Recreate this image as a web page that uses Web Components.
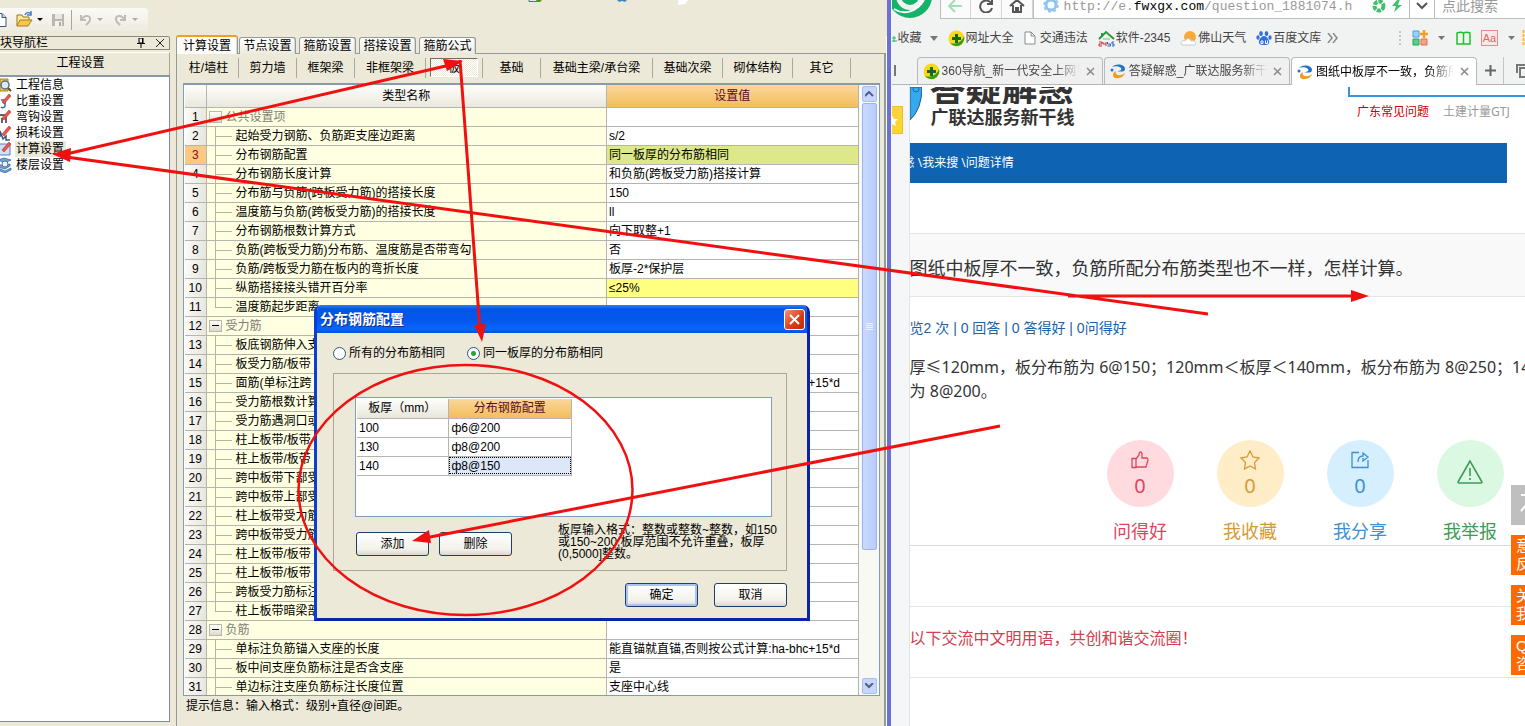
<!DOCTYPE html>
<html lang="zh-CN">
<head>
<meta charset="utf-8">
<title>工程设置</title>
<style>
html,body{margin:0;height:100%;overflow:hidden;background:#ece9d8}
body{font:12px/16px "Liberation Sans","Noto Sans CJK SC",sans-serif;color:#000}
</style>
</head>
<body>
<desk-top></desk-top>
<script>
const BASE = `*{box-sizing:border-box}button,input{font:inherit;color:inherit}a{color:inherit;text-decoration:none}svg{display:block;flex:none}`;
function define(name, css, html, setup) {
  customElements.define(name, class extends HTMLElement {
    constructor() {
      super();
      this.attachShadow({ mode: 'open' });
    }
    connectedCallback() {
      const markup = typeof html === 'function' ? html(this) : html;
      this.shadowRoot.innerHTML = `<style>${BASE}${css}</style>${markup}`;
      if (setup) setup(this);
    }
  });
}

/* ---------- Left application ---------- */

define('tool-bar', `
:host{display:block;height:36px;padding-top:8px}
.strip{width:148px;height:23px;display:flex;align-items:center;background:linear-gradient(#fbfaf6,#eeebdf);border-radius:0 4px 4px 0;padding-bottom:0}
button{border:0;background:none;padding:0;margin:0;height:20px;display:flex;align-items:center}
.new{width:16px}.open{width:22px}.drop{width:9px;margin-right:5px}.save{width:20px}
.sep{width:1px;height:20px;background:#a9a698;margin-right:6px}
.hist{width:18px;margin-left:0}.d2{width:9px;margin:0 7px 0 2px}`, `
<div class="strip">
<button class="new" aria-label="新建"><svg width="16" height="16"><path d="M-4 1.500h6l4 4v9h-10z" fill="#fff" stroke="#3b5578"/><path d="M2 1.500v4h4" fill="#b9d0ee" stroke="#3b5578"/></svg></button>
<button class="open" aria-label="打开"><svg width="18" height="17"><path d="M1 15V4h5l1 2h6v3" fill="#ffe9a0" stroke="#9a7418"/><path d="M1 15l3-6h12l-4 6z" fill="#f5c84c" stroke="#a87f1c"/><path d="M9 4c1-3 4-3 6-1M15 0v4h-4" fill="none" stroke="#4a7ec2" stroke-width="1.500"/></svg></button>
<button class="drop" aria-label="打开菜单"><svg width="7" height="4"><path d="M0 0h6L3 3z"/></svg></button>
<button class="save" aria-label="保存"><svg width="14" height="14"><path d="M1 1h12v12H1z" fill="#b8b7b0"/><path d="M4 1h7v5H4z" fill="#e8e7e1"/><path d="M4 8h7v5H4z" fill="#f4f3ee"/><path d="M8 9h2v4H8z" fill="#aaa"/></svg></button>
<span class="sep"></span>
<button class="hist" aria-label="撤销"><svg width="16" height="16"><path d="M3 3v5h5M3 8c3-5 8-5 9-2s-2 5-4 7" fill="none" stroke="#bdbcb5" stroke-width="2"/></svg></button>
<button class="d2" aria-label="撤销菜单"><svg width="7" height="4"><path d="M0 0h6L3 3z" fill="#aaa"/></svg></button>
<button class="hist" aria-label="重做"><svg width="16" height="16"><path d="M12 3v5H7M12 8C9 3 4 3 3 6s2 5 4 7" fill="none" stroke="#bdbcb5" stroke-width="2"/></svg></button>
<button class="d2" aria-label="重做菜单"><svg width="7" height="4"><path d="M0 0h6L3 3z" fill="#aaa"/></svg></button>
</div>`);

const tool = (x) => `<svg width="12" height="16">${x}</svg>`;
const pen = '<path d="M2 9L9 1l2 2-7 8z" fill="#e8574a" stroke="#b23428" stroke-width=".6"/>';
const NAV = [
  ['工程信息', tool('<path d="M0 2h8v12H0z" fill="#f2c44c" stroke="#a87f1c"/><circle cx="5" cy="8" r="4" fill="#d9ecfb" stroke="#5c7186" stroke-width="1.500"/><path d="M8 11l3 3" stroke="#6b4b2a" stroke-width="2"/>')],
  ['比重设置', tool('<path d="M1 7h4v6c0 2-3 2-4 1M5 9v4" fill="none" stroke="#3a6a9a" stroke-width="1.500"/>' + pen)],
  ['弯钩设置', tool('<path d="M0 6h6v8M2 9v5" fill="none" stroke="#333" stroke-width="1.500"/>' + pen)],
  ['损耗设置', tool('<path d="M0 12V6l3 8 3-3v4h4" fill="none" stroke="#3a5578" stroke-width="1.500"/>' + pen)],
  ['计算设置', tool('<path d="M-2 3h12v11H-2z" fill="#cfe0f8" stroke="#5a7db8"/>' + pen)],
  ['楼层设置', tool('<path d="M-2 3l6-2 7 2-6 3zM-2 7l6 2 6-2v2l-5 3-7-2zM-2 11l7 3 6-3v2l-6 3-7-3z" fill="#6aa4e0" stroke="#2d5f9e" stroke-width=".7"/><circle cx="5" cy="7" r="3" fill="#e5f2fd" stroke="#5c7186"/>')]
];
define('nav-panel', `
:host{display:flex;flex-direction:column;min-height:0}
header{height:14px;display:flex;align-items:center;border:1px solid #8c897c;border-left:0;border-radius:0 2px 0 0;padding-right:5px}
header b{font-weight:400;flex:1}
header button{border:0;background:none;padding:0;display:flex;margin-left:11px}
h2{margin:2px 0 0;height:23px;border:1px solid #a7a597;border-left:0;border-top-color:#fff;font:inherit;line-height:20px;text-align:center;padding-right:8px;border-bottom:0}
nav{flex:1;background:#fff;border:1px solid #7f8ea0;border-left:0;border-top:2px solid #8a98a8;margin-bottom:4px}
a{display:flex;align-items:center;height:16px}
a span{padding:0 2px 0 1px;margin-left:3px}
a.on span{background:#ece9d8}`, `
<header><b>块导航栏</b><button aria-label="固定"><svg width="8" height="10"><path d="M2 0h4v5H2zM0 5.500h8M4 6v4M5.500 0v5" fill="none" stroke="#000"/></svg></button><button aria-label="关闭"><svg width="8" height="8"><path d="M0 0l8 8M8 0L0 8" stroke="#222"/></svg></button></header>
<h2>工程设置</h2>
<nav>${NAV.map(([t, i]) => `<a href="#"${t === '计算设置' ? ' class="on"' : ''}>${i}<span>${t}</span></a>`).join('')}</nav>`);

define('tab-strip', `
:host{display:flex;gap:3px;align-items:flex-end;height:18px;padding:0}
button{height:17px;width:57px;padding:0;border:1px solid #919b9c;border-bottom:0;border-radius:3px 3px 0 0;background:linear-gradient(#fff,#eceadf);line-height:14px;box-shadow:inset -1px 0 #dcdacd}
button.on{height:19px;width:62px;margin-right:-2px;border-top:2px solid #f0a020;background:#fcfcfa}`, `
<button class="on">计算设置</button><button>节点设置</button><button>箍筋设置</button><button>搭接设置</button><button>箍筋公式</button>`);

const CATS = [['柱/墙柱', 60], ['剪力墙', 58], ['框架梁', 58], ['非框架梁', 71], ['板', 57], ['基础', 58], ['基础主梁/承台梁', 112], ['基础次梁', 70], ['砌体结构', 70], ['其它', 58]];
define('category-bar', `
:host{display:flex;height:20px;margin:2px 0 5px 0;overflow:hidden}
.c{flex:none;border-right:1px solid #aca899;display:flex;justify-content:center}
button{border:0;background:none;padding:0;height:19px;line-height:18px;white-space:nowrap}
button.on{width:48px;border:1px solid #716f64;border-right-color:#fff;border-bottom-color:#fff;background:repeating-conic-gradient(#fff 0 25%,#ece9d8 0 50%) 0 0/2px 2px}`,
CATS.map(([t, w]) => `<span class="c" style="width:${w}px"><button${t === '板' ? ' class="on"' : ''}>${t}</button></span>`).join(''));

const ROWS = [
  ['g', '公共设置项', ''], ['', '起始受力钢筋、负筋距支座边距离', 's/2'], ['', '分布钢筋配置', '同一板厚的分布筋相同'],
  ['', '分布钢筋长度计算', '和负筋(跨板受力筋)搭接计算'], ['', '分布筋与负筋(跨板受力筋)的搭接长度', '150'],
  ['', '温度筋与负筋(跨板受力筋)的搭接长度', 'll'], ['', '分布钢筋根数计算方式', '向下取整+1'],
  ['', '负筋(跨板受力筋)分布筋、温度筋是否带弯勾', '否'], ['', '负筋/跨板受力筋在板内的弯折长度', '板厚-2*保护层'],
  ['', '纵筋搭接接头错开百分率', '≤25%'], ['e', '温度筋起步距离', ''],
  ['g', '受力筋', ''], ['', '板底钢筋伸入支', ''], ['', '板受力筋/板带', ''], ['', '面筋(单标注跨', '能直锚就直锚,否则按公式计算:ha-bhc+15*d'],
  ['', '受力筋根数计算', ''], ['', '受力筋遇洞口或', ''], ['', '柱上板带/板带', ''], ['', '柱上板带/板带', ''],
  ['', '跨中板带下部受', ''], ['', '跨中板带上部受', ''], ['', '柱上板带受力筋', ''], ['', '跨中板带受力筋', ''],
  ['', '柱上板带/板带', ''], ['', '柱上板带/板带', ''], ['', '跨板受力筋标注', ''], ['e', '柱上板带暗梁部', ''],
  ['g', '负筋', ''], ['', '单标注负筋锚入支座的长度', '能直锚就直锚,否则按公式计算:ha-bhc+15*d'],
  ['', '板中间支座负筋标注是否含支座', '是'], ['', '单边标注支座负筋标注长度位置', '支座中心线']
];
define('settings-grid', `
:host{display:flex;border:1px solid #7f9db9;border-top:2px solid #8a9aa8;background:#fff;overflow:hidden;min-height:0}
.wrap{flex:1;overflow:hidden;padding-left:1px}
table{border-collapse:collapse;table-layout:fixed;width:100%}
th,td{padding:0;height:19px;font-weight:400;border:solid #b5b5b0;border-width:0 1px 1px 0;white-space:nowrap;overflow:hidden;line-height:18px}
thead th{height:22px;background:linear-gradient(#fdfdfb,#eae8dd)}
thead th.val{background:linear-gradient(#fbd79a,#f2bd5c);color:#5c0a28}
tbody th{background:linear-gradient(100deg,#fcfcfa,#e6e4da);text-align:center}
tbody th.cur{background:#fdc880;color:#8a1010}
.name{background:#ffffe1}
.in{display:flex;height:18px;align-items:center}
.branch{width:17px;height:18px;margin:0 4px 0 8px;background:linear-gradient(#b5b5a4,#b5b5a4) 0 0/1px 100% no-repeat,linear-gradient(#b5b5a4,#b5b5a4) 0 9px/17px 1px no-repeat}
.branch.end{background-size:1px 9px,17px 1px}
.box{width:13px;height:12px;border:1px solid #b9b8ac;background:linear-gradient(#fff,#dcdacb);margin:0 4px 0 2px;display:flex;align-items:center;justify-content:center;padding:0}
.box i{width:7px;height:1px;background:#000}
.grp{color:#808078}
.v{padding-left:2px}
.v.hot{background:#dde889}.v.warn{background:#ffff80}
.bar{width:20px;padding:1px 2px 1px 3px;display:flex;flex-direction:column;background:#f8f8f5}
.bar button{height:16px;border:1px solid #a9bdf0;border-radius:2px;background:#c8d6fb;padding:0;display:flex;align-items:center;justify-content:center}
.thumb{flex:447;border:1px solid #9cb3ee;border-radius:2px;background:linear-gradient(90deg,#cbd9fd,#b9cbfa);display:flex;align-items:center;justify-content:center;margin-top:1px}
.rest{flex:128}`, `
<div class="wrap"><table><colgroup><col style="width:21px"><col style="width:59.500%"><col></colgroup>
<thead><tr><th></th><th>类型名称</th><th class="val">设置值</th></tr></thead><tbody>
${ROWS.map(([k, n, v], i) => `<tr><th${i === 2 ? ' class="cur"' : ''}>${i + 1}</th><td class="name"><div class="in">${k === 'g' ? `<button class="box" aria-label="折叠">${i ? '<i></i>' : ''}</button><span class="grp">${n}</span>` : `<span class="branch${k === 'e' ? ' end' : ''}"></span>${n}`}</div></td><td class="v${i === 2 ? ' hot' : i === 9 ? ' warn' : ''}">${v}</td></tr>`).join('')}
</tbody></table></div>
<div class="bar"><button aria-label="向上滚动"><svg width="9" height="6"><path d="M0 5l4-4 4 4" fill="none" stroke="#4d6185" stroke-width="2"/></svg></button>
<div class="thumb"><svg width="7" height="8"><path d="M0 .5h7M0 2.500h7M0 4.500h7M0 6.500h7" stroke="#eef4fe"/></svg></div><div class="rest"></div>
<button aria-label="向下滚动"><svg width="9" height="6"><path d="M0 0l4 4 4-4" fill="none" stroke="#4d6185" stroke-width="2"/></svg></button></div>`);

define('settings-app', `
:host{display:flex;flex-direction:column;background:#ece9d8;border-right:4px solid #6a70d4;overflow:hidden}
.main{flex:1;min-height:0;display:flex;gap:6px;border-right:1px solid #fff}
nav-panel{width:170px;flex:none}
.right{flex:1;min-width:0;display:flex;flex-direction:column}
.panel{flex:1;min-height:0;display:flex;flex-direction:column;border:1px solid #919b9c;border-width:1px 2px 0 1px;padding:2px 4px 0 2px;margin-top:-1px}
tab-strip{z-index:1}
settings-grid{flex:1;margin:0 0 0 4px}
p{margin:0;padding:2px 0 0 7px;height:30px;line-height:16px}`, `
<tool-bar></tool-bar>
<div class="main"><nav-panel></nav-panel>
<div class="right"><tab-strip></tab-strip><div class="panel"><category-bar></category-bar><settings-grid></settings-grid><p>提示信息：输入格式：级别+直径@间距。</p></div></div></div>`);

/* ---------- Dialog ---------- */

define('xp-button', `
:host{display:block;width:73px;height:24px}
button{width:100%;height:100%;border:1px solid #1f3f6b;border-radius:3px;background:linear-gradient(#fff,#f2f1ea 75%,#dcd8ca);padding:0;line-height:20px}
:host([primary]) button{box-shadow:inset 0 0 0 2px #a9c4f0}`, `<button><slot></slot></button>`);

define('rebar-dialog', `
:host{display:flex;flex-direction:column;background:#ece9d8;border:solid #0a3fd0;border-width:0 3px 3px;border-radius:7px 7px 0 0;border-right-color:#0a24a8;border-bottom-color:#0a24a8;overflow:hidden}
header{height:28px;flex:none;background:linear-gradient(#2d80f4,#0554e6 15%,#0458ee 60%,#0866fc 85%,#0650d8);display:flex;align-items:center;justify-content:space-between;padding:0 2px 0 3px;color:#fff;font-size:14px;font-weight:700;text-shadow:1px 1px #0a2f8a}
header button{width:21px;height:21px;border:1px solid #fff;border-radius:3px;background:linear-gradient(135deg,#f0937a,#d83c14 60%,#b82d08);padding:0;display:flex;align-items:center;justify-content:center}
.radios{display:flex;gap:22px;padding:12px 0 0 16px}
label{display:flex;align-items:center;gap:3px}
input{appearance:none;width:13px;height:13px;margin:0;border:1px solid #2a5580;border-radius:50%;background:#fff}
input:checked{background:radial-gradient(circle,#2aa52a 0 2px,#fff 3px)}
fieldset{margin:12px 20px 0 16px;height:198px;padding:23px 14px 0 21px;border:1px solid #aca899;min-width:0}
.list{height:120px;background:#fff;border:1px solid #7f9db9;padding:1px 0 0 1px}
table{border-collapse:collapse;table-layout:fixed;width:215px}
th,td{height:19px;padding:0;font-weight:400;border:solid #b5b5b0;border-width:0 1px 1px 0;line-height:18px}
th{background:linear-gradient(#fdfdfb,#e8e6da)}th+th{background:linear-gradient(#fbd79a,#f2bd5c);color:#5c0a28}
td{padding-left:2px}td+td{padding-left:3px}
td.sel{background:#dde7f7;outline:1px dotted #000;outline-offset:-2px}
.row{display:flex;margin:15px 0 0 1px}
.row xp-button+xp-button{margin-left:10px}
.row p{margin:-8px -8px 0 46px;line-height:12px;flex:1;white-space:nowrap}
footer{display:flex;justify-content:flex-end;gap:16px;padding:12px 20px 0 0}`, `
<header><span>分布钢筋配置</span><button aria-label="关闭"><svg width="11" height="11"><path d="M1 1l9 9M10 1l-9 9" stroke="#fff" stroke-width="2"/></svg></button></header>
<div class="radios"><label><input type="radio" name="m">所有的分布筋相同</label><label><input type="radio" name="m" checked>同一板厚的分布筋相同</label></div>
<fieldset><div class="list"><table><colgroup><col style="width:91px"><col></colgroup><thead><tr><th>板厚（mm）</th><th>分布钢筋配置</th></tr></thead>
<tbody><tr><td>100</td><td>ф6@200</td></tr><tr><td>130</td><td>ф8@200</td></tr><tr><td>140</td><td class="sel">ф8@150</td></tr></tbody></table></div>
<div class="row"><xp-button>添加</xp-button><xp-button>删除</xp-button><p>板厚输入格式：整数或整数~整数，如150<br>或150~200,板厚范围不允许重叠，板厚<br>(0,5000]整数。</p></div></fieldset>
<footer><xp-button primary>确定</xp-button><xp-button>取消</xp-button></footer>`);

/* ---------- Browser ---------- */

const ICON = {
  plus: '<svg width="17" height="17"><circle cx="8.500" cy="8.500" r="8" fill="#fbd81a"/><path d="M2 13A8 8 0 0 0 16 6C14 12 8 15 2 13z" fill="#2e9b2e"/><path d="M8.500 4v9M4 8.500h9" stroke="#116b1c" stroke-width="3"/></svg>',
  doc: '<svg width="12" height="14" style="margin:0 3px 0 0"><path d="M1 1h6l4 4v8H1zM7 1v4h4" fill="#fff" stroke="#8a8a8a"/></svg>',
  house: '<svg width="17" height="17"><path d="M1 9l7-7 8 7M4 7V3" fill="none" stroke="#2a9a3a" stroke-width="2"/><path d="M5 9h7" stroke="#7ac27a"/><path d="M1 12h3v2H1v2h3M5 12v2h3M8 12v4" fill="none" stroke="#d2302a"/><path d="M9.500 12v2h3v2h-3M16 12h-2v2h2v2h-2" fill="none" stroke="#2a62c8"/></svg>',
  sun: '<svg width="17" height="17"><circle cx="10" cy="7" r="6" fill="#f8a83a"/><path d="M1 14c0-4 3-4 4-3 2-4 6-2 6 0 4-1 5 2 4 4H2z" fill="#fff" stroke="#c9c9c9"/></svg>',
  paw: '<svg width="16" height="16" fill="#2f6fe0"><ellipse cx="5" cy="3.500" rx="1.800" ry="2.500"/><ellipse cx="10.500" cy="3.500" rx="1.800" ry="2.500"/><ellipse cx="2" cy="7.500" rx="1.600" ry="2.200"/><ellipse cx="14" cy="7.500" rx="1.600" ry="2.200"/><path d="M8 6c3 0 6 5 5 7s-3 2-5 2-4 0-5-2 2-7 5-7z"/><path d="M5 11h2v2.500H5zM9.500 10.500v3h2v-3" fill="none" stroke="#fff"/></svg>',
  e: '<svg width="17" height="16"><path d="M2 4C6 0 15 1 15 6c0 3-4 3-8 2 4 0 5-1 4-3-2-2-6-2-9-1z" fill="#1f74c8"/><circle cx="2" cy="7" r="1.500" fill="#1f74c8"/><path d="M6 8c-2 4 4 6 9 2-2 6-12 7-12 2 0-2 1-3 3-4z" fill="#f19a1c"/></svg>'
};
define('fav-link', `:host{display:block;flex:none}a{display:flex;align-items:center;gap:1px;white-space:nowrap}`,
  el => `<a href="#">${ICON[el.getAttribute('icon')]}<span><slot></slot></span></a>`);

define('page-tab', `
:host{display:flex;align-items:center;flex:0 1 187px;min-width:0;height:27px;border:1px solid #b9b9b9;border-bottom:0;border-radius:4px 4px 0 0;padding:0 7px 0 5px;background:#f0f0f0;color:#444}
:host([active]){background:#fff;color:#000}
span{flex:1;overflow:hidden;white-space:nowrap;margin:0 6px 0 2px;-webkit-mask:linear-gradient(90deg,#000 82%,transparent)}
button{border:0;background:none;padding:0}`,
  el => `${ICON[el.getAttribute('icon')]}<span><slot></slot></span><button aria-label="关闭标签"><svg width="9" height="9"><path d="M1 1l7 7M8 1L1 8" stroke="#8a8a8a" stroke-width="1.500"/></svg></button>`);

define('browser-chrome', `
:host{display:block;background:#f1f2f2;color:#444}
.addr{height:19px;display:flex;overflow:hidden}
.addr>*{flex:none}
.nav{display:flex;margin-left:2px;border:1px solid #bdbdbd;border-top:0;background:#fff;width:94px}
.nav button{flex:1;border:0;border-right:1px solid #d5d5d5;background:#fbfbfb;padding:0 0 6px;display:flex;justify-content:center;align-items:center}
.url{flex:1;min-width:0;display:flex;background:#fff;border-bottom:1px solid #bdbdbd;padding:0 6px 6px 9px;align-items:center;gap:5px}
.url div{flex:1;font:13px/13px "Liberation Mono","Noto Sans CJK SC",monospace;color:#999;white-space:nowrap;overflow:hidden}
.url b{font-weight:400;color:#000}
.more{width:26px;border:solid #bdbdbd;border-width:0 1px 1px;background:#fff;display:flex;align-items:center;justify-content:center;padding:0 0 6px}
.addr input{width:90px;border:0;border-bottom:1px solid #bdbdbd;background:#fff;padding:0 0 6px 7px;font-size:14px;outline:0;border-radius:0}
.addr input::placeholder{color:#999}
.fav{height:38px;display:flex;align-items:center;gap:10px;overflow:hidden}
.fav>*{flex:none}
.first{display:flex;align-items:center;gap:1px}
.first .caret{margin-left:7px}
.tools{margin-left:auto;display:flex;align-items:center;gap:10px}
.tools button{border:0;background:none;padding:0}
.tools .aa{width:17px;height:16px;border:1px solid #e98a8a;background:#fde8e8;color:#e06666;font-size:11px;line-height:14px}
.tabs{height:28px;display:flex;gap:1px;border-bottom:1px solid #b5b5b5;align-items:flex-end;padding-left:1px}
.menu{width:23px;height:27px;display:flex;align-items:center;flex:none}
.tabs>button{border:0;background:none;flex:none;width:24px;height:27px;display:flex;align-items:center;justify-content:center;padding:0}
.tabs .last{border-left:1px solid #c5c5c5;width:22px;justify-content:flex-end}
page-tab[active]{margin-bottom:-1px;height:28px}`, `
<div class="addr"><svg width="46" height="19"><circle cx="18" cy="-4" r="18" fill="none" stroke="#15b36a" stroke-width="8"/><circle cx="18" cy="-4" r="9" fill="#15b36a"/><path d="M2 9c9 6 22 4 30-9" fill="none" stroke="#fff" stroke-width="2"/></svg>
<div class="nav"><button aria-label="后退"><svg width="15" height="13"><path d="M14 6H2M7 0L1 6l6 6" fill="none" stroke="#a5dcb8" stroke-width="2"/></svg></button><button aria-label="刷新"><svg width="15" height="13"><path d="M12 3A6 6 0 1 0 13 8M13 0v4H8" fill="none" stroke="#555" stroke-width="2"/></svg></button><button aria-label="主页"><svg width="16" height="13"><path d="M1 6l7-6 7 6M4 5v7h3V8h2v4h3V5" fill="none" stroke="#555" stroke-width="2"/></svg></button></div>
<div class="url"><svg width="16" height="14"><circle cx="8" cy="6" r="5" fill="none" stroke="#8ec4ee" stroke-width="3"/><circle cx="8" cy="6" r="7" fill="none" stroke="#8ec4ee" stroke-width="1.500" stroke-dasharray="3 2.500"/></svg>
<div role="textbox" contenteditable="true" aria-label="地址">http://e.<b>fwxgx.com</b>/question_1881074.h</div>
<svg width="14" height="14"><circle cx="7" cy="7" r="4.500" fill="none" stroke="#3fc06a" stroke-width="4" stroke-dasharray="4 1"/></svg><svg width="12" height="14"><path d="M7 0L1 7h4l-2 6 8-7H7l2-6z" fill="#3fc06a"/></svg></div>
<button class="more" aria-label="展开"><svg width="12" height="8"><path d="M1 1l5 5 5-5" fill="none" stroke="#555" stroke-width="2"/></svg></button>
<input type="search" placeholder="点此搜索" aria-label="搜索"></div>
<div class="fav"><span class="first"><svg width="5" height="12"><path d="M0 6h4M2 4v6M0 9h5" stroke="#35b36a"/></svg><span>收藏</span><svg class="caret" width="8" height="5"><path d="M0 0h8L4 5z" fill="#777"/></svg></span>
<fav-link icon="plus">网址大全</fav-link><fav-link icon="doc">交通违法</fav-link><fav-link icon="house">软件-2345</fav-link><fav-link icon="sun">佛山天气</fav-link><fav-link icon="paw">百度文库</fav-link>
<svg width="12" height="10" style="margin-left:-4px"><path d="M1 0l4 5-4 5M6 0l4 5-4 5" fill="none" stroke="#888" stroke-width="1.500"/></svg>
<div class="tools"><svg width="3" height="14" fill="#c5c5c5"><path d="M0 0h2v2H0zM0 4h2v2H0zM0 8h2v2H0zM0 12h2v2H0z"/></svg>
<button aria-label="扩展"><svg width="16" height="16"><path d="M1 1h6v6H1z" fill="#9fd0f5" stroke="#4a9fe0"/><path d="M1 9h6v6H1z" fill="#58d08a" stroke="#22a858"/><path d="M9 9h6v6H9z" fill="#f8a08a" stroke="#e86a4a"/><path d="M12 0v8M8 4h8" stroke="#f5a01c" stroke-width="2.500"/></svg></button><svg width="8" height="5"><path d="M0 0h7L3.500 4z" fill="#777"/></svg>
<button aria-label="阅读"><svg width="15" height="14"><path d="M1 2c3-1 5-1 6.500 0 2-1 4-1 6.500 0v11H1zM7.500 2v11" fill="#eafbe9" stroke="#22c030" stroke-width="1.500"/></svg></button><button class="aa">Aa</button><svg width="8" height="5"><path d="M0 0h7L3.500 4z" fill="#777"/></svg><svg width="3" height="16" style="margin-left:-4px"><path d="M1.500 0v16" stroke="#f5b84a" stroke-width="2" stroke-dasharray="3 1"/></svg></div></div>
<div class="tabs"><span class="menu"><svg width="3" height="11"><path d="M2 0v11" stroke="#777" stroke-width="2"/></svg></span><page-tab icon="plus">360导航_新一代安全上网导</page-tab><page-tab icon="e">答疑解惑_广联达服务新干</page-tab><page-tab icon="e" active>图纸中板厚不一致，负筋所</page-tab>
<button aria-label="新标签"><svg width="11" height="11"><path d="M5.500 0v11M0 5.500h11" stroke="#666" stroke-width="2"/></svg></button><button class="last" aria-label="窗口"><svg width="9" height="14"><path d="M1 9V1h10M4 4h9v9H4z" fill="none" stroke="#777" stroke-width="2"/></svg></button></div>`);

define('action-item', `
:host{display:block;width:110px;flex:none}
button{display:flex;flex-direction:column;align-items:center;width:100%;border:0;background:none;padding:0;color:var(--ink)}
.disc{width:67px;height:67px;border-radius:50%;background:var(--fill);display:flex;flex-direction:column;align-items:center;justify-content:center;gap:4px}
.disc b{font:400 20px/24px "Noto Sans","Noto Sans CJK SC",sans-serif}
.cap{font-size:18px;line-height:24px;margin-top:12px}`,
  el => {
    const art = {
      like: '<svg width="20" height="20"><path d="M2 8.500h4v9H2zM6 9l3-4c0-4 3-4 3 0v3h5c1 0 1 1 1 2l-2 7H6" fill="none" stroke="currentColor" stroke-width="1.300"/></svg>',
      star: '<svg width="22" height="20"><path d="M11 1l3 6 6 1-4.500 4.500 1 6.500-5.500-3-5.500 3 1-6.500L2 8l6-1z" fill="none" stroke="currentColor" stroke-width="1.300"/></svg>',
      share: '<svg width="20" height="20"><path d="M9 2.500H2v15h16V10M8 12c0-4 2-6 5-6V3l5 4-5 4V8" fill="none" stroke="currentColor" stroke-width="1.300"/></svg>',
      warn: '<svg width="28" height="30"><path d="M14 2L2 23q0 1 1 1h22q1 0 1-1zM14 9v8M14 19v2" fill="none" stroke="currentColor" stroke-width="1.600"/></svg>'
    }[el.getAttribute('icon')];
    const n = el.getAttribute('count');
    return `<button><span class="disc">${art}${n === null ? '' : `<b>${n}</b>`}</span><span class="cap"><slot></slot></span></button>`;
  });

define('question-page', `
:host{display:flex;background:#fff;overflow:hidden;font-family:"Noto Sans","Noto Sans CJK SC",sans-serif}
aside{width:18px;flex:none;background:#f4f6f8;border-right:1px solid #e1e5e8;padding-top:21px}
aside button{width:11px;height:28px;background:#fcd535;border:1px solid #f0c020;border-left:0;padding:0;overflow:hidden}
main{flex:1;min-width:0}
.head{height:58px;display:flex;justify-content:space-between;padding-top:2px}
.logo{display:flex;color:#333;font-weight:700}
.logo svg{margin-right:8px}
.logo .big{height:17px;overflow:hidden;display:flex;align-items:flex-end;font:700 36px/36px "Noto Sans CJK SC",sans-serif}
.logo .small{font-size:18px;line-height:26px;display:block;padding-left:1px}
.search{width:177px}
.search i{display:block;height:10px;border:solid #3494e0;border-width:0 0 2px 2px}
.search p{margin:7px 0 0;padding-left:9px;display:flex;gap:14px;white-space:nowrap;color:#999;line-height:16px}
.search .r{color:#c00}
.crumb{height:40px;background:#0f63b3;margin-right:18px;color:#fff;line-height:40px;white-space:pre;text-indent:-7px;overflow:hidden}
h1{margin:50px 0 0;height:64px;border:solid #e5e5e5;border-width:1px 0;background:#f9f9f9;font-size:18px;font-weight:400;line-height:68px;color:#333;white-space:nowrap;overflow:hidden}
.stats{margin:0;padding:20px 0 0;font:14px/22px "Liberation Sans","Noto Sans CJK SC",sans-serif;color:#1862a8}
.body{margin:16px 0 37px;font-size:16px;line-height:24px;color:#333;white-space:nowrap;overflow:hidden}
.acts{display:flex;justify-content:flex-end;padding-bottom:2px;border-bottom:1px solid #d8dbdd}
.blank{height:61px;border-bottom:1px solid #e3e6e8}
.note{margin:0;height:71px;border-bottom:1px solid #e3e6e8;font-size:16px;line-height:62px;color:#d0404e}`, `
<aside><button aria-label="收藏夹"><svg width="11" height="26"><path d="M0 9l2 3 4 0-3 3 1 4-4-2z" fill="#fff"/></svg></button></aside>
<main><div class="head"><div class="logo"><svg width="12" height="36"><path d="M0 0h12Q12 22 0 33z" fill="#35a8ee" stroke="#225a88"/><circle cx="6" cy="2" r="3" fill="none" stroke="#1670b8"/></svg><div><span class="big">答疑解惑</span><span class="small">广联达服务新干线</span></div></div>
<div class="search"><i></i><p><a href="#" class="r">广东常见问题</a><a href="#">土建计量GTJ</a></p></div></div>
<div class="crumb">惑 \\<a href="#">我来搜</a> \\<a href="#">问题详情</a></div>
<h1>图纸中板厚不一致，负筋所配分布筋类型也不一样，怎样计算。</h1>
<p class="stats">览2 次 | 0 回答 | 0 答得好 | 0问得好</p>
<p class="body">厚≤120mm，板分布筋为 6@150；120mm＜板厚＜140mm，板分布筋为 8@250；14<br>为 8@200。</p>
<div class="acts"><action-item icon="like" count="0" style="--ink:#dc4660;--fill:#ffdade">问得好</action-item><action-item icon="star" count="0" style="--ink:#d59a38;--fill:#ffedc8">我收藏</action-item><action-item icon="share" count="0" style="--ink:#3d8fd4;--fill:#d6efff">我分享</action-item><action-item icon="warn" style="--ink:#3f9a58;--fill:#dbf9e2">我举报</action-item></div>
<div class="blank"></div><p class="note">以下交流中文明用语，共创和谐交流圈！</p></main>`);

define('side-dock', `
:host{display:flex;flex-direction:column;gap:10px;width:14px;overflow:hidden}
button{height:40px;width:50px;border:0;background:#ff6a00;color:#fff;text-align:left;padding:0 0 0 5px;font-size:15px;line-height:18px}
.top{background:#bfbfbf;padding-left:9px}`, `
<button class="top" aria-label="返回顶部"><svg width="22" height="24"><path d="M1 2h20M11 6L1 18M11 6l10 12" stroke="#fff" stroke-width="2"/></svg></button><button>意见<br>反馈</button><button>关注<br>我们</button><button>QQ<br>咨询</button>`);

/* ---------- Hand-drawn red annotations ---------- */

define('red-marks', `:host{display:block;pointer-events:none}svg{overflow:visible}`, `
<svg width="1" height="1"><g fill="none" stroke="#f01010" stroke-width="3"><path d="M62 155L450 65M460 60L480 330M1208 314L66 157M1000 426L425 538M1068 296H1356"/><ellipse cx="465.500" cy="490" rx="167" ry="125" stroke-width="2.500"/></g>
<g fill="#f01010"><path d="M52 154l19-6-1 14zM463 61l-20-2 4 12zM482 342l-8-17 12-1zM412 541l17-11 2 13zM1369 296l-18-6v12z"/></g></svg>`);

define('desk-top', `
:host{display:flex;position:relative;height:100vh;overflow:hidden}
settings-app{flex:0 0 58.400%}
.web{flex:1;min-width:0;display:flex;flex-direction:column;border-left:1px solid #f4f4f4}
question-page{flex:1;min-height:0}
rebar-dialog{position:absolute;left:314px;top:305px;width:496px;height:316px}
side-dock{position:absolute;right:0;top:485px}
red-marks{position:absolute;left:0;top:0}
.bits{position:absolute;left:528px;top:0}`, `
<settings-app></settings-app>
<div class="web"><browser-chrome></browser-chrome><question-page></question-page></div>
<svg class="bits" width="165" height="6"><path d="M1 0v1.500h8" fill="none" stroke="#2b7fae"/><path d="M8 0h6l-2 2H9z" fill="#3a9a30"/><path d="M89 0h10l-2 2-3-1-3 1z" fill="#4388c4"/><path d="M150 0h10l-3 4-7 1z" fill="#fff"/></svg>
<rebar-dialog></rebar-dialog><side-dock></side-dock><red-marks></red-marks>`);
</script>
</body>
</html>
